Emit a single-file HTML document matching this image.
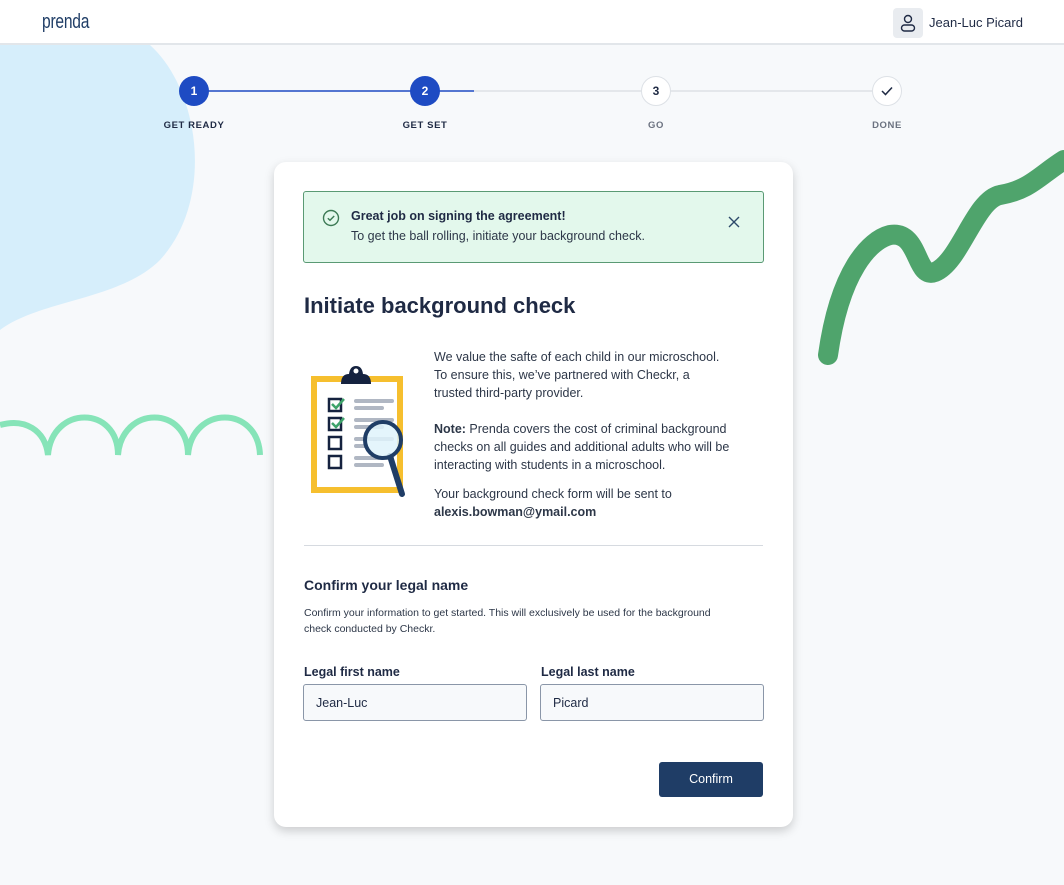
<!DOCTYPE html>
<html><head><style>
*{box-sizing:border-box;margin:0;padding:0}
body{width:1064px;height:885px;background:#f7f9fb;font-family:"Liberation Sans",sans-serif;color:#1f2a44;position:relative;overflow:hidden}
.hdr{position:absolute;left:0;top:0;width:1064px;height:45px;background:#fff;border-bottom:2px solid #e2e6ea;z-index:2}
.logo{position:absolute;left:42px;top:11px;font-size:20px;color:#1f3d66;letter-spacing:-0.3px;transform:scaleX(.78);transform-origin:left}
.user{position:absolute;left:893px;top:8px;width:30px;height:30px;background:#e9ecf0;border-radius:4px}
.uname{position:absolute;left:929px;top:15px;font-size:13px;color:#1f2a44}
.step{position:absolute;width:30px;height:30px;border-radius:50%;text-align:center;line-height:30px;font-size:12px;font-weight:bold}
.lbl{position:absolute;font-size:9.5px;font-weight:bold;letter-spacing:.6px;width:120px;text-align:center;top:120px}
.card{position:absolute;left:274px;top:162px;width:519px;height:665px;background:#fff;border-radius:12px;box-shadow:0 4px 10px rgba(0,0,0,.18)}
.alert{position:absolute;left:29px;top:29px;width:461px;height:72px;background:#e3f8ec;border:1px solid #5a9a74;border-radius:3px}
h1{position:absolute;left:30px;top:131px;font-size:22px;font-weight:bold;color:#1f2a44}
.p{position:absolute;left:160px;font-size:12.5px;line-height:18px;color:#2d3748}
.in{position:absolute;top:522px;width:224px;height:37px;border:1px solid #8a96a8;border-radius:3px;background:#f7f9fb;padding:11px 12px;font-size:12.5px}
</style></head><body>
<svg style="position:absolute;left:0;top:0" width="1064" height="885">
<path d="M0 45 L150 45 C200 90 215 200 160 260 C120 300 40 300 0 330 Z" fill="#d6eefb"/>
<path d="M0 425 C25 418 45 430 48 455 C52 405 118 405 118 455 C122 405 188 405 188 455 C192 405 258 405 260 455" stroke="#86e4b8" stroke-width="6" fill="none"/>
<path d="M828 355 C840 270 870 240 890 235 C920 230 915 280 935 272 C960 262 975 200 1000 195 C1030 190 1040 175 1064 160" stroke="#4fa46c" stroke-width="20" fill="none" stroke-linecap="round"/>
<line x1="193" y1="91" x2="424" y2="91" stroke="#1e4bc3" stroke-width="1.5"/>
<line x1="424" y1="91" x2="474" y2="91" stroke="#1e4bc3" stroke-width="1.5"/>
<line x1="474" y1="91" x2="888" y2="91" stroke="#dde1e6" stroke-width="1.5"/>
</svg>
<div class="hdr"><div class="logo">prenda</div>
<div class="user"><svg width="30" height="30"><circle cx="15" cy="11" r="3.5" fill="none" stroke="#1f2a44" stroke-width="1.4"/><rect x="8.5" y="17" width="13" height="6" rx="3" fill="none" stroke="#1f2a44" stroke-width="1.4"/></svg></div>
<div class="uname">Jean-Luc Picard</div></div>
<div class="step" style="left:179px;top:76px;background:#1e4bc3;color:#fff">1</div>
<div class="step" style="left:410px;top:76px;background:#1e4bc3;color:#fff">2</div>
<div class="step" style="left:641px;top:76px;background:#fff;border:1px solid #dde1e6;color:#1f2a44;line-height:28px">3</div>
<div class="step" style="left:872px;top:76px;background:#fff;border:1px solid #dde1e6"><svg width="28" height="28"><path d="M9 14 L12.5 17.5 L19 10.5" stroke="#1f2a44" stroke-width="1.5" fill="none"/></svg></div>
<div class="lbl" style="left:134px;color:#1f2a44">GET READY</div>
<div class="lbl" style="left:365px;color:#1f2a44">GET SET</div>
<div class="lbl" style="left:596px;color:#6b7280">GO</div>
<div class="lbl" style="left:827px;color:#6b7280">DONE</div>
<div class="card">
<div class="alert">
<svg style="position:absolute;left:18px;top:17px" width="18" height="18"><circle cx="9" cy="9" r="7.5" fill="none" stroke="#3d7a55" stroke-width="1.4"/><path d="M5.8 9.2 L8 11.3 L12.2 7" stroke="#3d7a55" stroke-width="1.4" fill="none"/></svg>
<div style="position:absolute;left:47px;top:17px;font-size:12.5px;font-weight:bold">Great job on signing the agreement!</div>
<div style="position:absolute;left:47px;top:37px;font-size:12.5px;color:#2d3748">To get the ball rolling, initiate your background check.</div>
<svg style="position:absolute;left:423px;top:23px" width="14" height="14"><path d="M2 2 L12 12 M12 2 L2 12" stroke="#2d4a6a" stroke-width="1.4"/></svg>
</div>
<h1>Initiate background check</h1>
<svg style="position:absolute;left:34px;top:200px" width="100" height="140">
<rect x="6" y="17" width="86" height="111" fill="none" stroke="#f6bf2e" stroke-width="6"/>
<rect x="9" y="20" width="80" height="105" fill="#fff"/>
<path d="M33 22 Q33 12 41 12 Q42 4 48 4 Q54 4 55 12 Q63 12 63 22 Z" fill="#15223f"/>
<circle cx="48" cy="9" r="2.5" fill="#fff"/>
<g fill="none" stroke="#15223f" stroke-width="2.5"><rect x="21" y="37" width="12" height="12"/><rect x="21" y="56" width="12" height="12"/><rect x="21" y="75" width="12" height="12"/><rect x="21" y="94" width="12" height="12"/></g>
<path d="M24 42 L28 46 L36 37 M24 61 L28 65 L36 56" stroke="#3ea36a" stroke-width="2.5" fill="none"/>
<g stroke="#b0b7c3" stroke-width="4" stroke-linecap="round"><line x1="48" y1="39" x2="84" y2="39"/><line x1="48" y1="46" x2="74" y2="46"/><line x1="48" y1="58" x2="84" y2="58"/><line x1="48" y1="65" x2="74" y2="65"/><line x1="48" y1="77" x2="84" y2="77"/><line x1="48" y1="84" x2="58" y2="84"/><line x1="48" y1="96" x2="84" y2="96"/><line x1="48" y1="103" x2="74" y2="103"/></g>
<line x1="82" y1="94" x2="94" y2="132" stroke="#1f3d66" stroke-width="6" stroke-linecap="round"/>
<circle cx="75" cy="78" r="18" fill="#dff3fb" fill-opacity=".85" stroke="#1f3d66" stroke-width="4"/>
</svg>
<div class="p" style="top:186px">We value the safte of each child in our microschool.<br>To ensure this, we’ve partnered with Checkr, a<br>trusted third-party provider.</div>
<div class="p" style="top:258px"><b>Note:</b> Prenda covers the cost of criminal background<br>checks on all guides and additional adults who will be<br>interacting with students in a microschool.</div>
<div class="p" style="top:323px">Your background check form will be sent to<br><b>alexis.bowman@ymail.com</b></div>
<div style="position:absolute;left:30px;top:383px;width:459px;height:1px;background:#d6dae0"></div>
<div style="position:absolute;left:30px;top:415px;font-size:14px;font-weight:bold">Confirm your legal name</div>
<div style="position:absolute;left:30px;top:443px;font-size:10.5px;line-height:16px;color:#2d3748">Confirm your information to get started. This will exclusively be used for the background<br>check conducted by Checkr.</div>
<div style="position:absolute;left:30px;top:503px;font-size:12.5px;font-weight:bold">Legal first name</div>
<div style="position:absolute;left:267px;top:503px;font-size:12.5px;font-weight:bold">Legal last name</div>
<div class="in" style="left:29px">Jean-Luc</div>
<div class="in" style="left:266px">Picard</div>
<div style="position:absolute;left:385px;top:600px;width:104px;height:35px;background:#1f3d66;border-radius:3px;color:#fff;font-size:12.5px;text-align:center;line-height:35px">Confirm</div>
</div>
</body></html>
